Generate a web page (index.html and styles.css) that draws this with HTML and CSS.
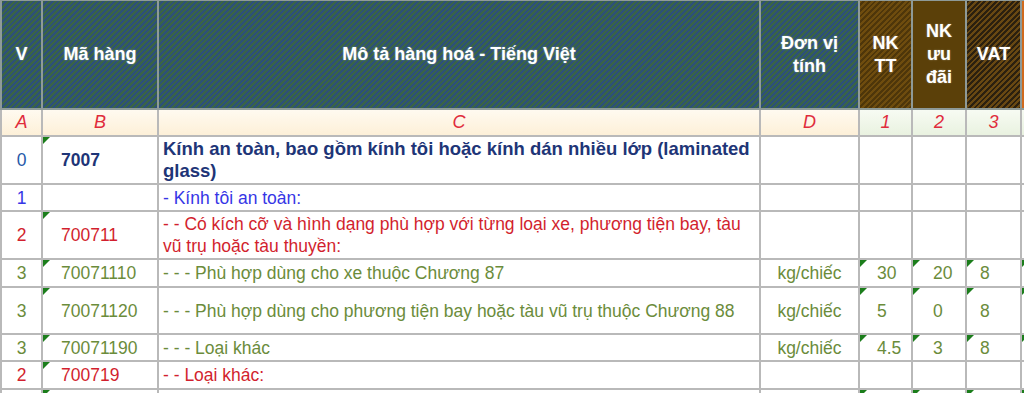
FILE: index.html
```html
<!DOCTYPE html>
<html lang="vi">
<head>
<meta charset="utf-8">
<title>Biểu thuế</title>
<link rel="stylesheet" href="styles.css">
</head>
<body>
<table class="sheet">
  <colgroup>
    <col class="c-v"><col class="c-code"><col class="c-desc"><col class="c-unit"><col class="c-n1"><col class="c-n2"><col class="c-n3"><col class="c-x">
  </colgroup>
  <thead>
    <tr class="head">
      <th class="h-blue">V</th>
      <th class="h-blue">Mã hàng</th>
      <th class="h-blue">Mô tả hàng hoá - Tiếng Việt</th>
      <th class="h-blue">Đơn vị<br>tính</th>
      <th class="h-nktt">NK<br>TT</th>
      <th class="h-nkud">NK<br>ưu<br>đãi</th>
      <th class="h-vat">VAT</th>
      <th class="h-edge"></th>
    </tr>
    <tr class="letters">
      <td class="l-cream">A</td>
      <td class="l-cream">B</td>
      <td class="l-cream">C</td>
      <td class="l-cream">D</td>
      <td class="l-green">1</td>
      <td class="l-green">2</td>
      <td class="l-green">3</td>
      <td class="l-green"></td>
    </tr>
  </thead>
  <tbody>
    <tr class="r-h48 lv0">
      <td class="v">0</td>
      <td class="code tri">7007</td>
      <td class="desc">Kính an toàn, bao gồm kính tôi hoặc kính dán nhiều lớp (laminated glass)</td>
      <td></td><td></td><td></td><td></td><td></td>
    </tr>
    <tr class="r-h27 lv1">
      <td class="v">1</td>
      <td class="code"></td>
      <td class="desc">- Kính tôi an toàn:</td>
      <td></td><td></td><td></td><td></td><td></td>
    </tr>
    <tr class="r-h48 lv2">
      <td class="v">2</td>
      <td class="code tri">700711</td>
      <td class="desc">- - Có kích cỡ và hình dạng phù hợp với từng loại xe, phương tiện bay, tàu vũ trụ hoặc tàu thuyền:</td>
      <td></td><td></td><td></td><td></td><td></td>
    </tr>
    <tr class="r-h28 lv3">
      <td class="v">3</td>
      <td class="code tri">70071110</td>
      <td class="desc">- - - Phù hợp dùng cho xe thuộc Chương 87</td>
      <td class="unit">kg/chiếc</td>
      <td class="n1 tri">30</td>
      <td class="n2 tri">20</td>
      <td class="n3 tri">8</td>
      <td class="tri"></td>
    </tr>
    <tr class="r-h47 lv3">
      <td class="v">3</td>
      <td class="code tri">70071120</td>
      <td class="desc">- - - Phù hợp dùng cho phương tiện bay hoặc tàu vũ trụ thuộc Chương 88</td>
      <td class="unit">kg/chiếc</td>
      <td class="n1 tri">5</td>
      <td class="n2 tri">0</td>
      <td class="n3 tri">8</td>
      <td class="tri"></td>
    </tr>
    <tr class="r-h27 lv3">
      <td class="v">3</td>
      <td class="code tri">70071190</td>
      <td class="desc">- - - Loại khác</td>
      <td class="unit">kg/chiếc</td>
      <td class="n1 tri">4.5</td>
      <td class="n2 tri">3</td>
      <td class="n3 tri">8</td>
      <td class="tri"></td>
    </tr>
    <tr class="r-h28 lv2">
      <td class="v">2</td>
      <td class="code tri">700719</td>
      <td class="desc">- - Loại khác:</td>
      <td></td><td></td><td></td><td></td><td></td>
    </tr>
    <tr class="r-h28 lv3">
      <td class="v"></td>
      <td class="code tri"></td>
      <td class="desc"></td>
      <td class="unit"></td>
      <td class="n1 tri"></td>
      <td class="n2 tri"></td>
      <td class="n3 tri"></td>
      <td class="tri"></td>
    </tr>
  </tbody>
</table>
</body>
</html>
```

FILE: styles.css
```css
html, body {
  margin: 0;
  padding: 0;
  background: #ffffff;
  overflow: hidden;
}
.sheet {
  border-collapse: collapse;
  table-layout: fixed;
  width: 1026px;
  font-family: "Liberation Sans", Arial, sans-serif;
  font-size: 17.5px;
  margin-top: -1px;
}
.c-v { width: 41px; }
.c-code { width: 116px; }
.c-desc { width: 602px; }
.c-unit { width: 99px; }
.c-n1 { width: 53px; }
.c-n2 { width: 54px; }
.c-n3 { width: 55px; }
.c-x { width: 6px; }

.sheet td, .sheet th {
  border: 2px solid #b9b9b9;
  padding: 0;
  overflow: hidden;
  white-space: nowrap;
}

/* header */
.head { height: 109px; }
.sheet .head th {
  color: #ffffff;
  font-weight: bold;
  font-size: 18px;
  line-height: 23px;
  text-align: center;
  vertical-align: middle;
  border-color: #8e9a98;
  text-shadow: 0 0 2px rgba(255,255,255,0.35);
}
.h-blue {
  background: repeating-linear-gradient(135deg, #3a6446 0px, #3a6446 2px, #2d5079 2px, #2d5079 4px);
}
.h-nktt {
  background: repeating-linear-gradient(135deg, #6e4c0e 0px, #6e4c0e 2px, #4e360a 2px, #4e360a 4px);
}
.h-nkud {
  background: #5b4009;
}
.h-vat {
  background: repeating-linear-gradient(135deg, #2b200f 0px, #2b200f 2px, #684812 2px, #684812 4px);
}
.h-edge {
  background: #d06a1e;
}

/* letter row */
.letters { height: 27px; }
.sheet .letters td {
  text-align: center;
  vertical-align: middle;
  font-style: italic;
  color: #e02c3c;
  font-size: 18px;
}
.l-cream {
  background: linear-gradient(#fffaf0, #fdf0d8);
}
.l-green {
  background: linear-gradient(#f7fbf3, #e9f2e0);
}

/* body rows */
.r-h48 { height: 48px; }
.r-h47 { height: 47px; }
.r-h28 { height: 28px; }
.r-h27 { height: 27px; }

.sheet tbody td {
  vertical-align: middle;
  line-height: 22px;
  position: relative;
}
.sheet .v { text-align: center; }
.sheet .code { padding-left: 18px; }
.sheet .desc {
  padding-left: 4px;
  white-space: normal;
}
.sheet .unit { text-align: center; }
.sheet .n1 { padding-left: 17px; }
.sheet .n2 { padding-left: 20px; }
.sheet .n3 { padding-left: 13px; }

.lv0 .v { color: #2558a8; }
.sheet .lv0 .code { color: #1e3577; font-weight: bold; }
.sheet .lv0 .desc { color: #1e3577; font-weight: bold; font-size: 18.5px; }
.lv1 td { color: #3636e6; }
.lv2 td { color: #d21f2e; }
.lv3 td { color: #6b8c3b; }

.tri::before {
  content: "";
  position: absolute;
  top: 0;
  left: 0;
  width: 0;
  height: 0;
  border-top: 7px solid #1b7d1b;
  border-right: 7px solid transparent;
}
```
